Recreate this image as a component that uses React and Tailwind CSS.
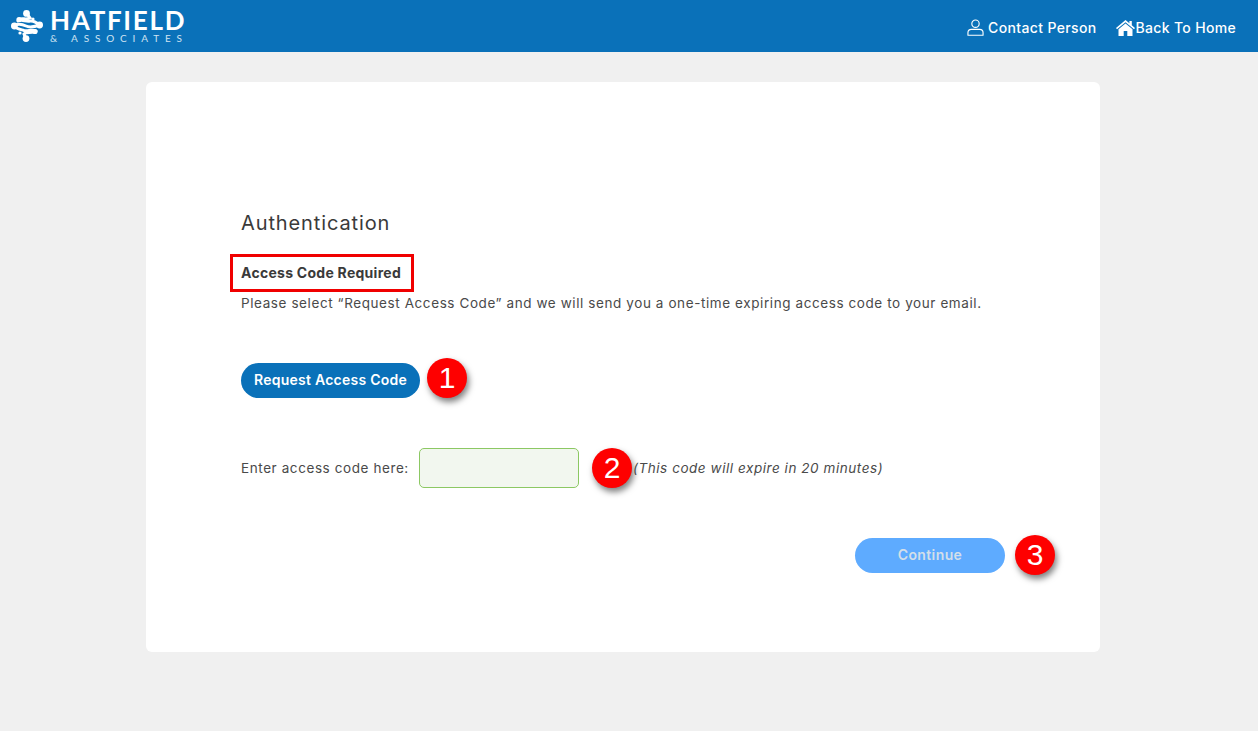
import React from "react";

const font = { fontFamily: "Inter, 'Noto Sans', sans-serif" };

function Badge({ n, className = "" }) {
  return (
    <span className={`flex h-10 w-10 shrink-0 items-center justify-center rounded-full bg-[#fe0000] text-[30px] leading-none text-white shadow-[2px_4px_6px_rgba(0,0,0,0.5)] [font-family:'Liberation_Sans',sans-serif] ${className}`}>
      {n}
    </span>
  );
}

function LogoMark() {
  return (
    <svg width="32" height="32" viewBox="0 0 32 32" fill="none" className="shrink-0">
      <g stroke="#fff" strokeWidth="3" strokeLinecap="round" fill="none">
        <path d="M15.5 3 L19 8 C15 10 12 8 9 9" />
        <path d="M7 11 C11 9 15 12 19 11 C22 10.5 25 12 29 15" />
        <path d="M3 16 C7 13 11 14 15 16 C19 18 23 17 29 15" />
        <path d="M3 16 C6 19 10 19.5 13 20.5 C17 21.5 21 19 25 21" />
        <path d="M23 22 C19 23 15 22 13 24 L15 29" />
      </g>
      <g fill="#fff">
        <circle cx="15.5" cy="3.4" r="3.4" />
        <circle cx="3.4" cy="16" r="3.4" />
        <circle cx="28.6" cy="15" r="3.4" />
        <circle cx="15" cy="28.6" r="3.4" />
        <circle cx="8" cy="9.5" r="2.6" />
        <circle cx="24" cy="21.5" r="2.6" />
        <circle cx="22" cy="9" r="1.6" />
        <circle cx="9" cy="23" r="1.6" />
      </g>
    </svg>
  );
}

function UserIcon() {
  return (
    <svg width="17" height="17" viewBox="0 0 18 18" fill="none" stroke="#fff" strokeWidth="1.2" className="shrink-0">
      <circle cx="9" cy="5" r="3.9" />
      <path d="M1 17.2 V14.5 C1 12.4 2.6 11 4.6 11 H13.4 C15.4 11 17 12.4 17 14.5 V17.2 Z" strokeLinejoin="round" />
    </svg>
  );
}

function HomeIcon() {
  return (
    <svg width="19" height="16" viewBox="0 0 19 16" fill="#fff" className="shrink-0">
      <path d="M9.5 0 L13.4 3.3 V1 H15.8 V5.3 L19 8 L18 9.2 L9.5 2.2 L1 9.2 L0 8 Z" />
      <path d="M9.5 3.5 L16.5 9.2 V16 H11.3 V11 H7.7 V16 H2.5 V9.2 Z" />
    </svg>
  );
}

export default function App() {
  return (
    <div className="min-h-[731px] bg-[#f0f0f0]" style={font}>
      <header className="flex h-[52px] items-center justify-between bg-[#0a71b9] pl-[11px] pr-[22px] text-white">
        <div className="flex items-center gap-[7px]">
          <LogoMark />
          <div className="flex w-[136px] flex-col [font-family:Lato,sans-serif]">
            <span className="h-[21px] whitespace-nowrap text-[26px] font-bold leading-[21px] tracking-[1.7px]">HATFIELD</span>
            <span className="mt-[3px] h-[9px] whitespace-nowrap text-[10px] leading-[9px] tracking-[5.85px] text-[#cfe3f2]">&amp; ASSOCIATES</span>
          </div>
        </div>
        <nav className="flex items-center gap-[20px] pt-[3px] text-[14px] font-medium">
          <a className="flex items-center gap-[4px] tracking-[0.35px]"><UserIcon />Contact Person</a>
          <a className="flex items-center tracking-[0.33px]"><HomeIcon />Back To Home</a>
        </nav>
      </header>

      <main className="flex justify-start pl-[146px] pt-[30px]">
        <section className="flex h-[570px] w-[954px] flex-col rounded-[6px] bg-white pl-[95px] pr-[45px] pt-[128px] text-[#444]">
          <h1 className="text-[20px] font-normal leading-[26px] tracking-[0.88px] text-[#3a3a3a]">Authentication</h1>

          <div className="ml-[-11px] mt-[18px] flex h-[38px] w-[184px] items-center border-[3px] border-[#f00000] pb-[2px] pl-[8px]">
            <strong className="whitespace-nowrap text-[14px] font-bold tracking-[0.27px] text-[#3a3a3a]">Access Code Required</strong>
          </div>

          <p className="mt-[1px] whitespace-nowrap text-[13.5px] leading-[20px] tracking-[0.59px] text-[#4a4a4a]">
            Please select “Request Access Code” and we will send you a one-time expiring access code to your email.
          </p>

          <div className="mt-[47px] flex items-center gap-[7px]">
            <button className="h-[35px] w-[179px] rounded-full bg-[#0a71b9] pb-[2px] text-[14px] font-semibold tracking-[0.25px] text-white">Request Access Code</button>
            <Badge n="1" className="relative top-[-2px]" />
          </div>

          <div className="mt-[48px] flex items-center">
            <label className="w-[178px] text-[13.5px] tracking-[0.59px] text-[#4a4a4a]">Enter access code here:</label>
            <input className="h-[40px] w-[160px] rounded-[5px] border border-[#8cc863] bg-[#f2f7ef] outline-none" />
            <span className="ml-[13px]"><Badge n="2" /></span>
            <em className="ml-[1px] text-[13.5px] tracking-[0.55px] text-[#4a4a4a]">(This code will expire in 20 minutes)</em>
          </div>

          <div className="mt-[47px] flex items-center justify-end gap-[10px]">
            <button className="h-[35px] w-[150px] rounded-full bg-[#5eabff] pb-[2px] text-[14px] font-semibold tracking-[0.4px] text-[#d3dfea]">Continue</button>
            <Badge n="3" />
          </div>
        </section>
      </main>
    </div>
  );
}
